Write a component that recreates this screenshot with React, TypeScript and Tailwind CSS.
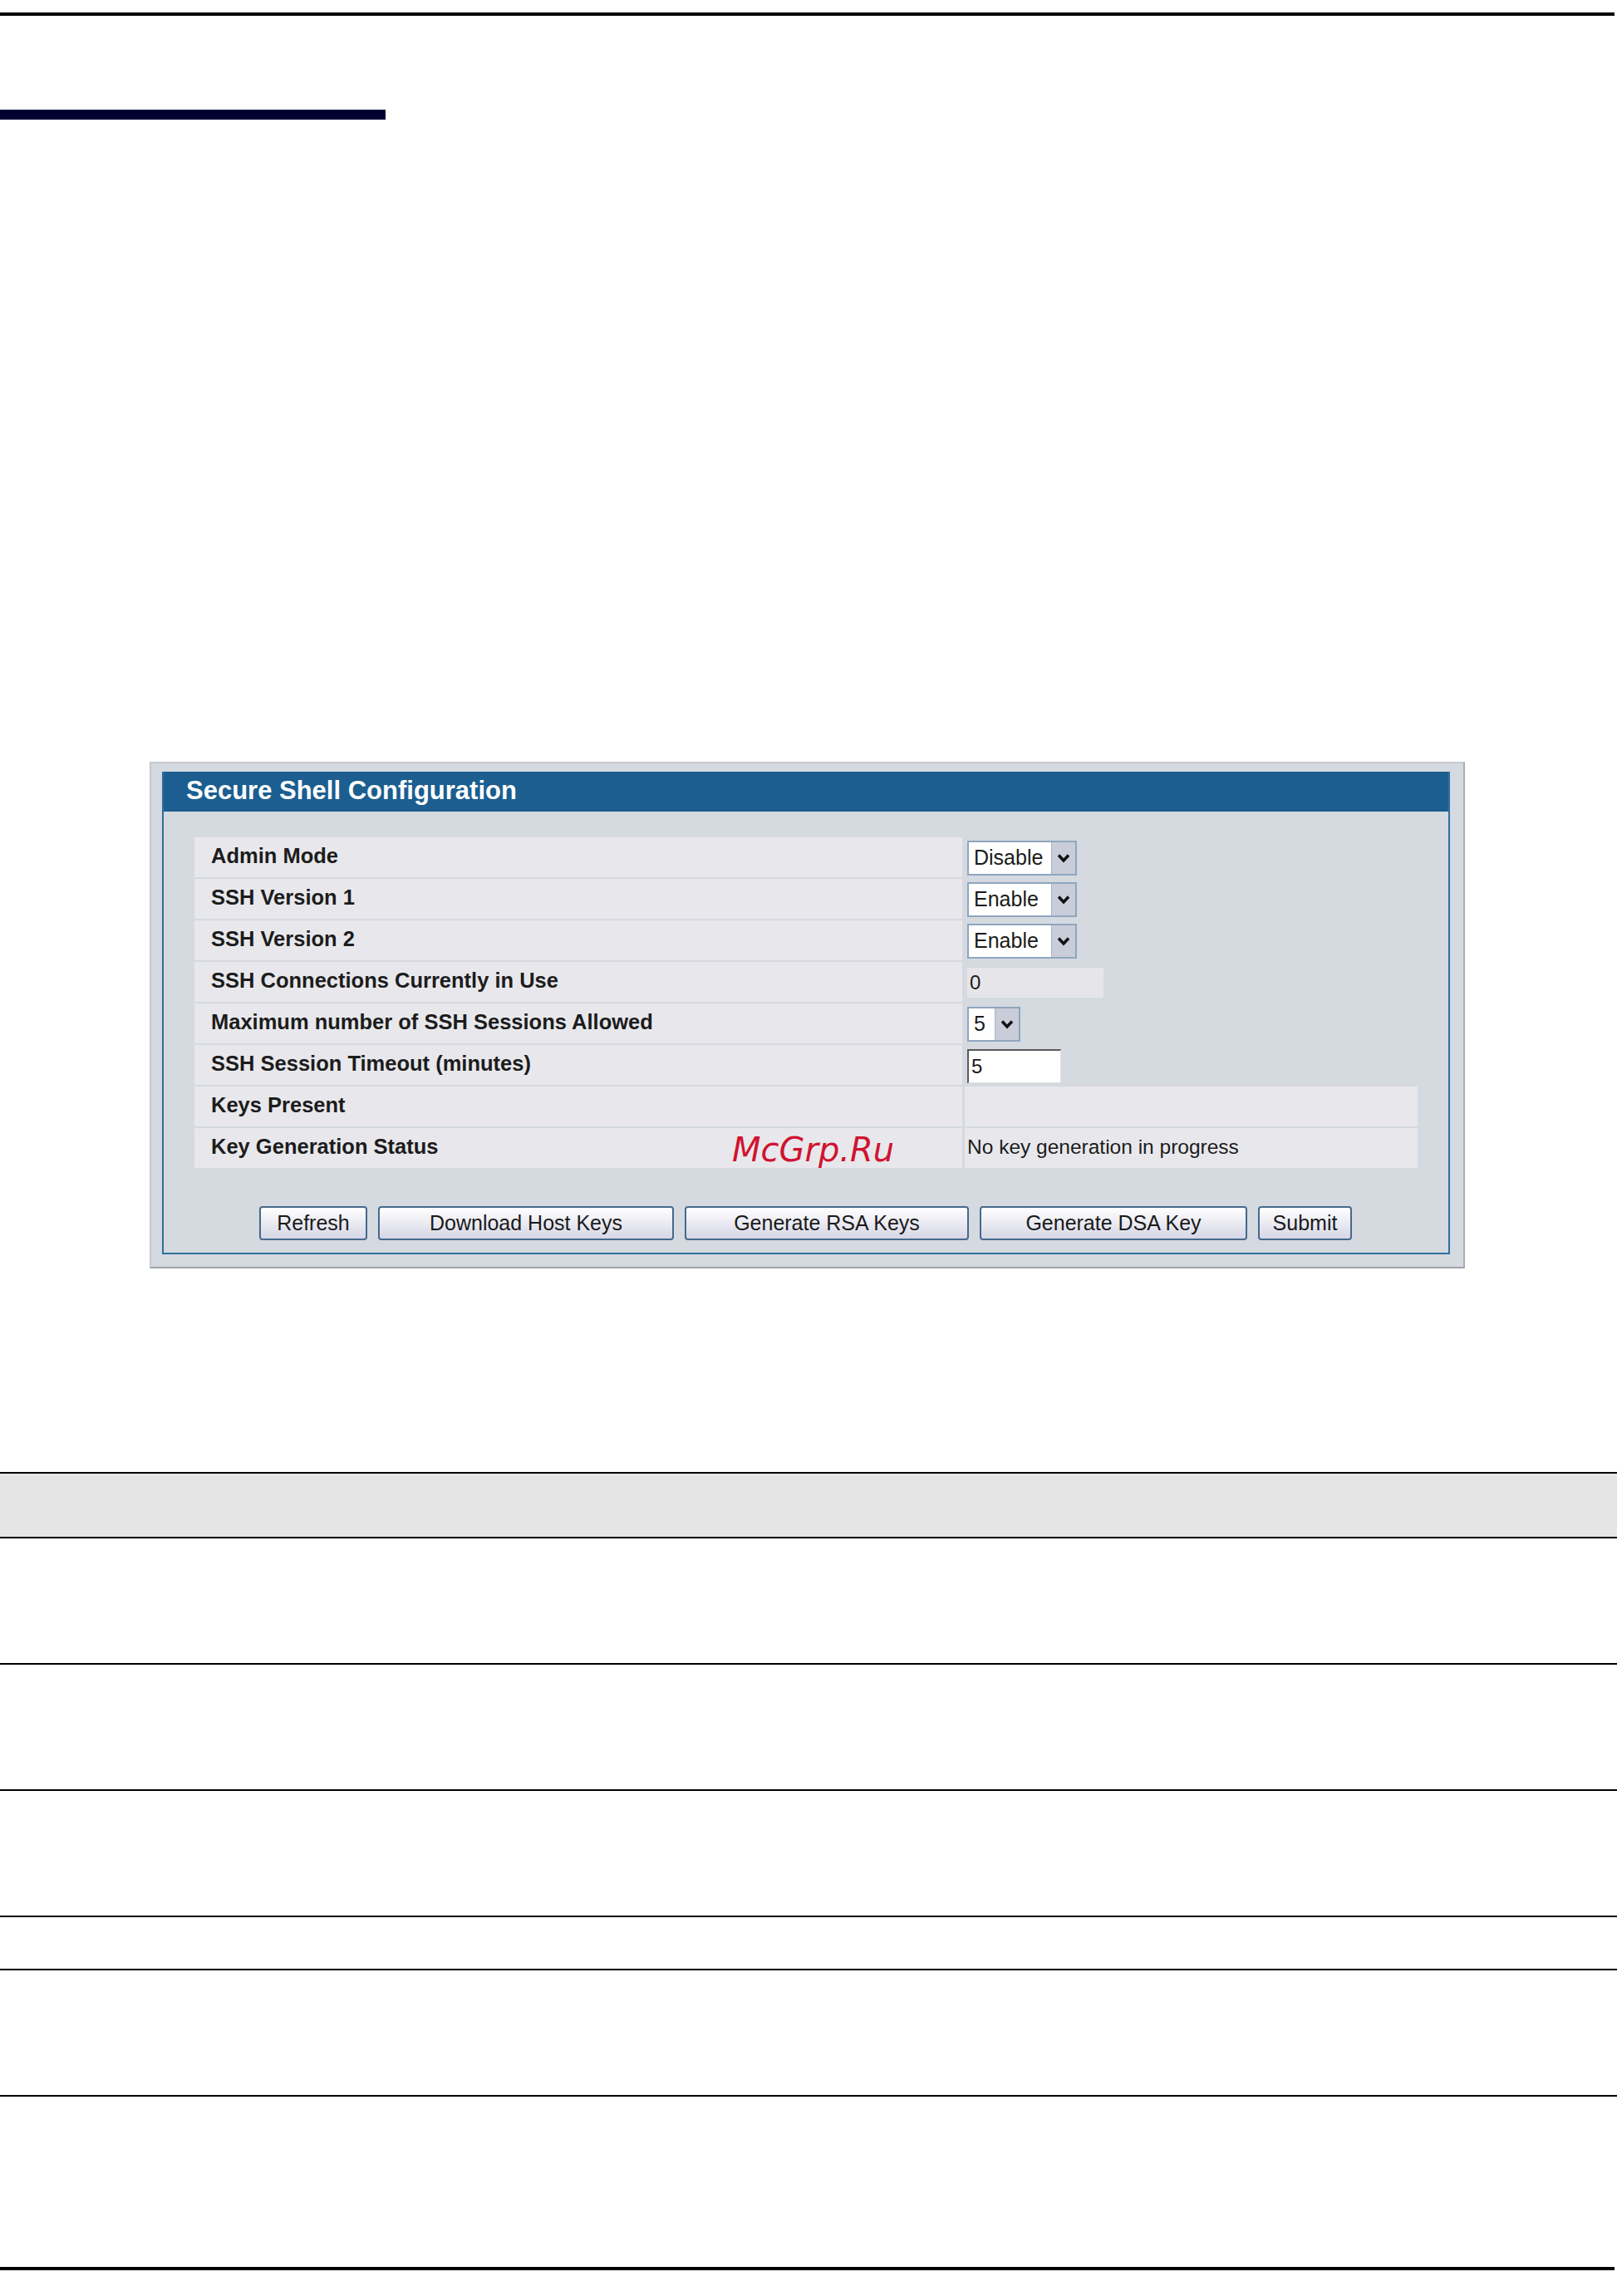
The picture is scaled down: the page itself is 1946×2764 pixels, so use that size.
import React from "react";

const font = { fontFamily: '"Liberation Sans", Arial, sans-serif' };

function Chevron() {
  return (
    <svg width="16" height="12" viewBox="0 0 16 12">
      <polyline points="2,2.5 8,9 14,2.5" fill="none" stroke="#111" strokeWidth="3.5" />
    </svg>
  );
}

function Select({ value, w }: { value: string; w: string }) {
  return (
    <div className={`flex h-[42px] ${w} border-2 border-[#8fa6be] bg-white`}>
      <div className="flex flex-1 items-center pl-[6px] text-[25px] text-[#1a1a1a]">{value}</div>
      <div className="flex w-[29px] items-center justify-center border-l border-[#aab4c4] bg-[#c9cdd9]">
        <Chevron />
      </div>
    </div>
  );
}

function Btn({ label, w }: { label: string; w: string }) {
  return (
    <div
      className={`flex h-[41px] ${w} items-center justify-center rounded-[4px] border-2 border-[#46698c] bg-gradient-to-b from-[#ffffff] to-[#d6d6e6] text-[25px] text-[#1a1a1a]`}
    >
      {label}
    </div>
  );
}

const rows: { label: string; value: React.ReactNode; wide?: boolean }[] = [
  { label: "Admin Mode", value: <Select value="Disable" w="w-[132px]" /> },
  { label: "SSH Version 1", value: <Select value="Enable" w="w-[132px]" /> },
  { label: "SSH Version 2", value: <Select value="Enable" w="w-[132px]" /> },
  {
    label: "SSH Connections Currently in Use",
    value: (
      <div className="flex h-[36px] w-[164px] items-center bg-[#e6e6ea] pl-[3px] text-[24px] text-[#1a1a1a]">0</div>
    ),
  },
  { label: "Maximum number of SSH Sessions Allowed", value: <Select value="5" w="w-[64px]" /> },
  {
    label: "SSH Session Timeout (minutes)",
    value: (
      <div className="flex h-[41px] w-[113px] items-center border-t-2 border-l-2 border-b border-r border-t-[#5a5a5a] border-l-[#5a5a5a] border-b-[#e0e0e0] border-r-[#e0e0e0] bg-white pl-[3px] text-[24px] text-[#1a1a1a]">
        5
      </div>
    ),
  },
  { label: "Keys Present", value: "", wide: true },
  { label: "Key Generation Status", value: "No key generation in progress", wide: true },
];

export default function App() {
  return (
    <div className="relative h-[2764px] w-[1946px] bg-white" style={font}>
      <div className="pt-[15px]">
        <div className="h-[4px] w-[1943px] bg-black" />
      </div>
      <div className="mt-[113px] h-[12px] w-[464px] bg-[#000033]" />

      {/* Panel */}
      <div className="ml-[180px] mt-[773px] h-[610px] w-[1583px] border-2 border-t-[#c6c9cf] border-l-[#c6c9cf] border-r-[#a9abb0] border-b-[#a0a2a6] bg-[#d5d9e0] pl-[13px] pt-[10px]">
        <div className="flex h-[581px] w-[1550px] flex-col border-2 border-[#2f6f9f] border-t-0">
          <div className="flex h-[48px] items-center bg-[#1b5e8f] pl-[27px] pb-[2px] text-[31px] font-bold text-white">
            Secure Shell Configuration
          </div>
          <div className="relative flex flex-col gap-[2px] pl-[37px] pt-[31px]">
            {rows.map((r) => (
              <div key={r.label} className="flex h-[48px] gap-[3px]">
                <div className="flex w-[924px] items-center bg-[#e8e8ec] pb-[4px] pl-[20px] text-[25.5px] font-bold text-[#1c1c1c]">
                  {r.label}
                </div>
                <div
                  className={`flex w-[545px] items-center pl-[3px] ${r.wide ? "bg-[#e8e8ec] pb-[2px] text-[24.5px] text-[#1c1c1c]" : "pt-[2px]"}`}
                >
                  {r.value}
                </div>
              </div>
            ))}
            <div
              className="absolute left-[684px] top-[377px] text-[40px] italic text-[#d0132f]"
              style={{ fontFamily: '"DejaVu Sans", sans-serif' }}
            >
              McGrp.Ru
            </div>
          </div>
          <div className="mt-[46px] flex gap-[13px] pl-[115px]">
            <Btn label="Refresh" w="w-[130px]" />
            <Btn label="Download Host Keys" w="w-[356px]" />
            <Btn label="Generate RSA Keys" w="w-[342px]" />
            <Btn label="Generate DSA Key" w="w-[322px]" />
            <Btn label="Submit" w="w-[113px]" />
          </div>
        </div>
      </div>

      {/* Bottom table */}
      <div className="mt-[245px] w-[1946px]">
        <div className="h-[80px] border-t-2 border-b-2 border-black bg-[#e5e5e5]" />
        <div className="h-[152px] border-b-2 border-black" />
        <div className="h-[152px] border-b-2 border-black" />
        <div className="h-[152px] border-b-2 border-black" />
        <div className="h-[64px] border-b-2 border-black" />
        <div className="h-[152px] border-b-2 border-black" />
        <div className="h-[205px]" />
        <div className="h-[4px] w-[1943px] bg-black" />
      </div>
    </div>
  );
}
